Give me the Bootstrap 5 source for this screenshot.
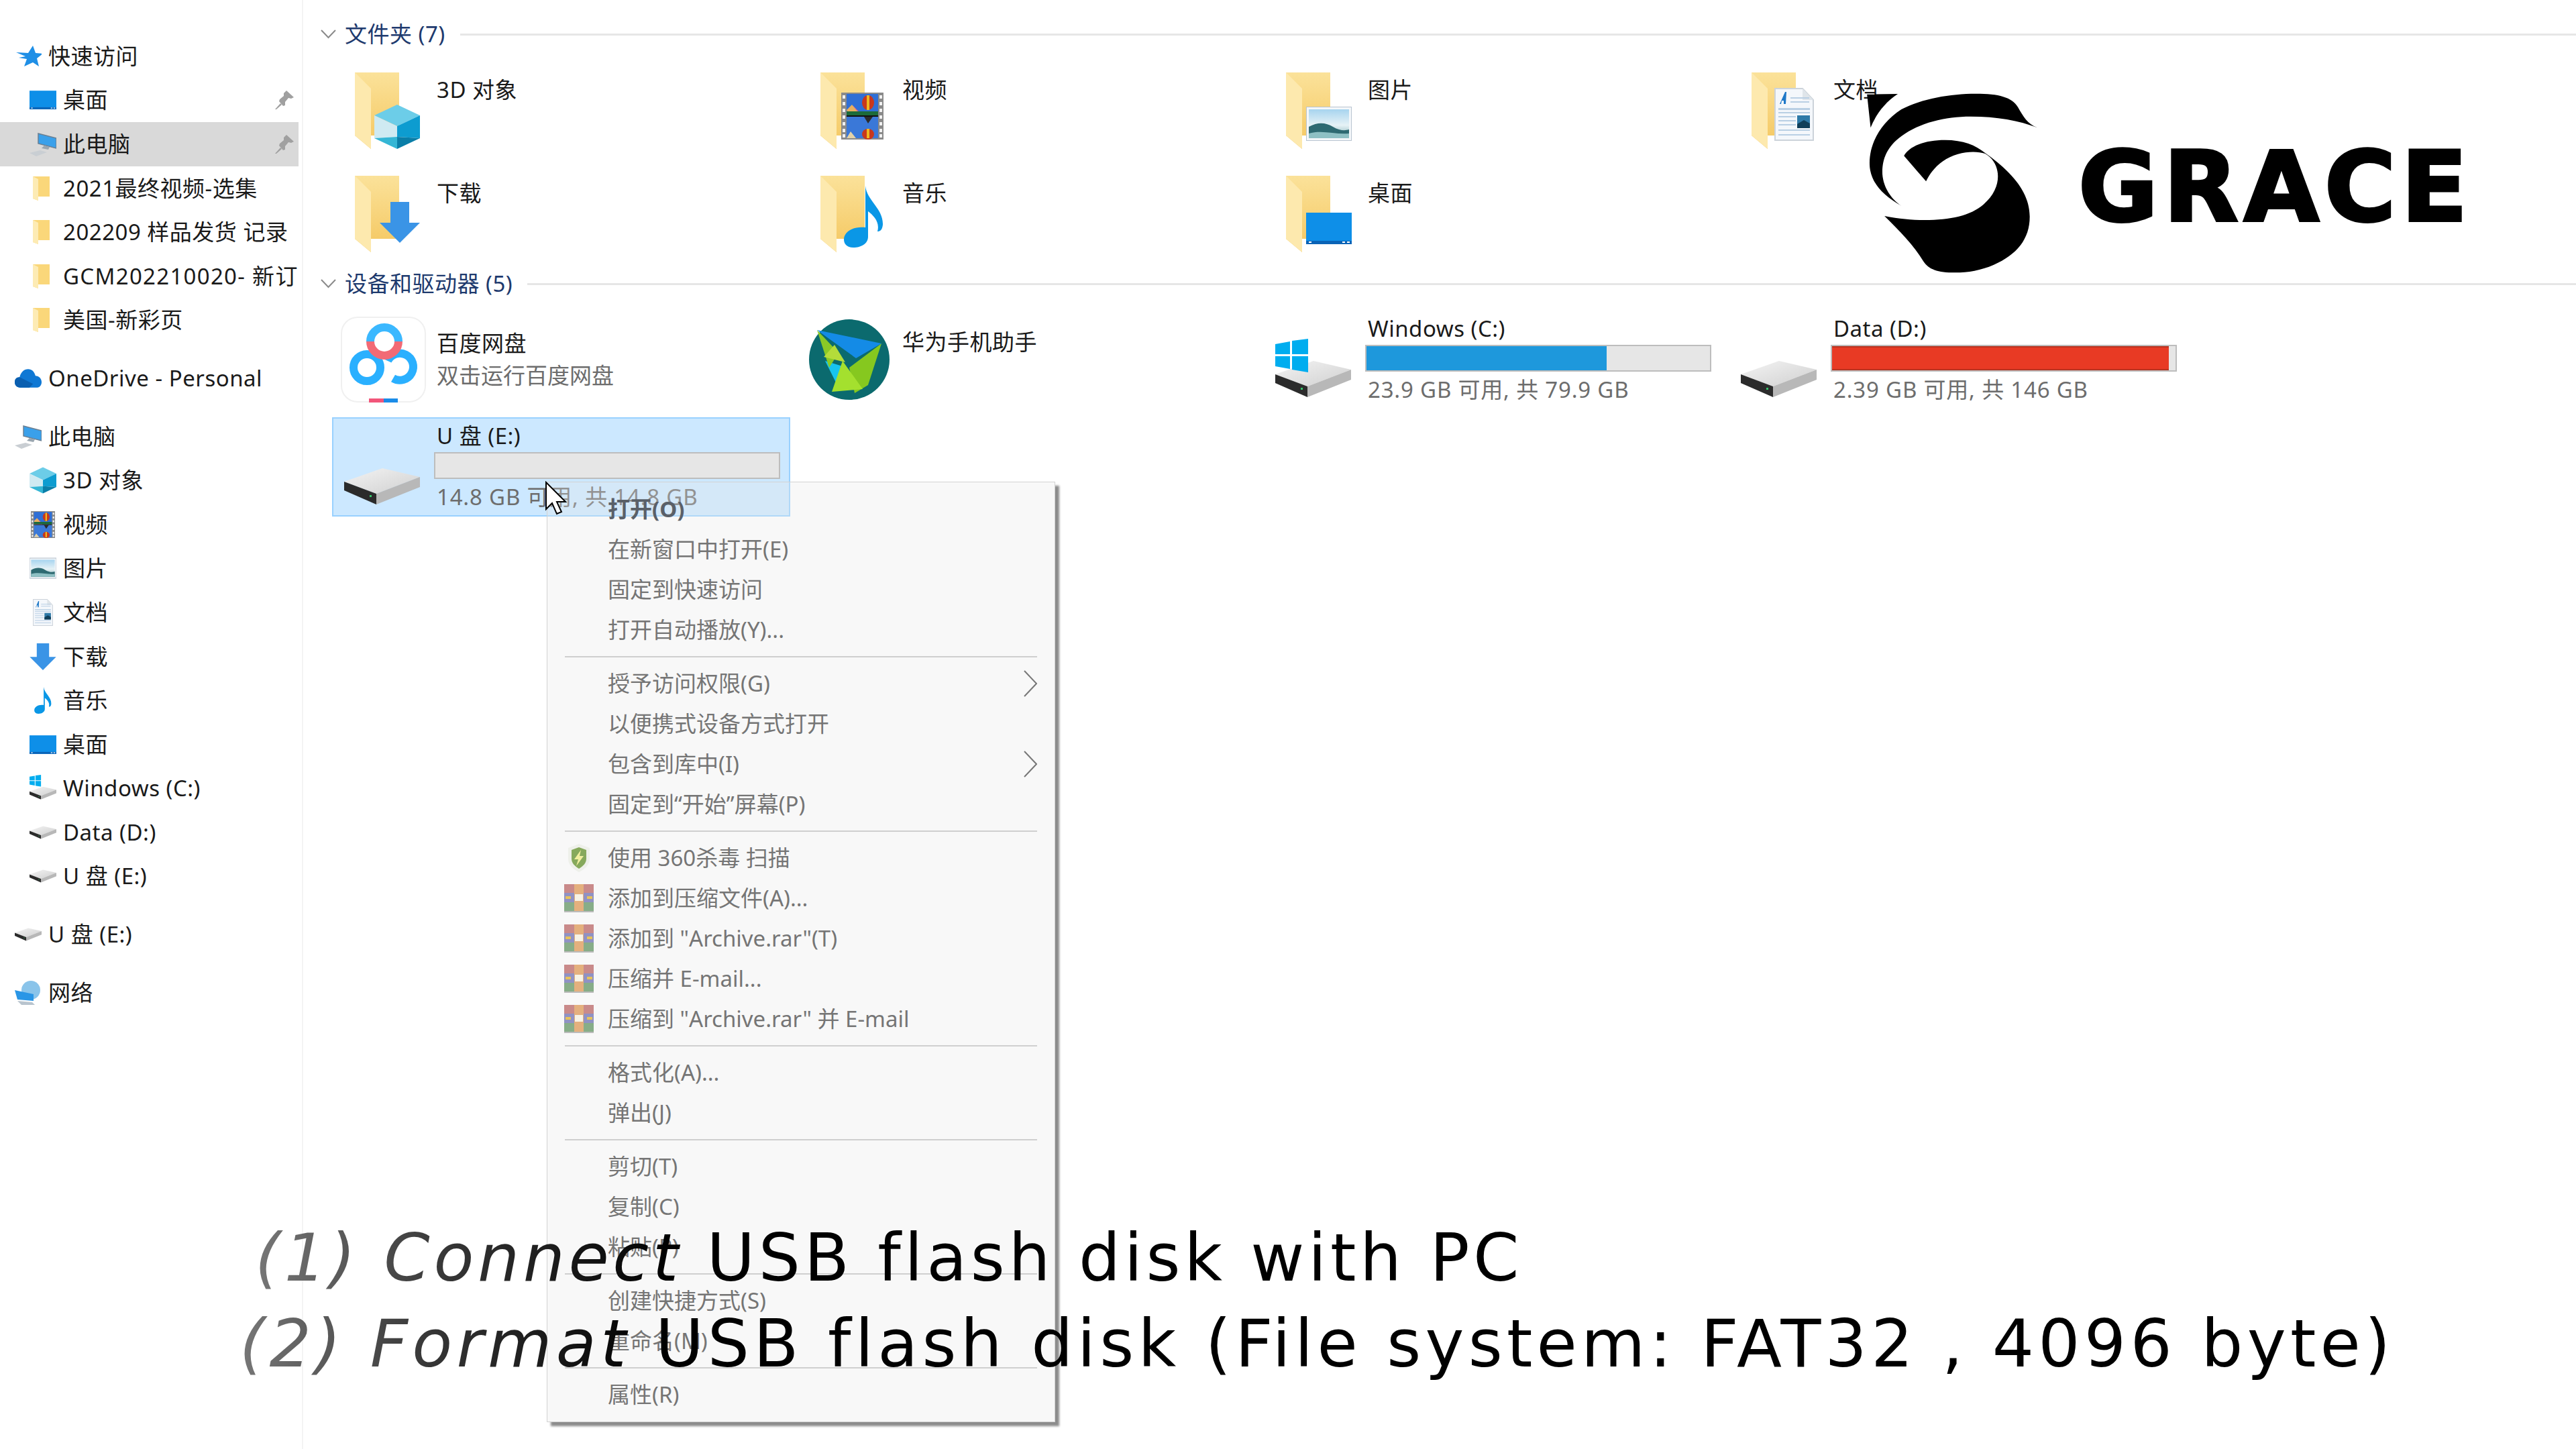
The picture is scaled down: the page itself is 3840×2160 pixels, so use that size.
<!DOCTYPE html>
<html lang="zh-CN">
<head>
  <meta charset="UTF-8">
  <title>此电脑</title>
  <link href="https://cdn.jsdelivr.net/npm/bootstrap@5.3.0/dist/css/bootstrap.min.css" rel="stylesheet">
  <style>
    body { width: 3840px; height: 2160px; overflow: hidden; background: #fff; color: #1a1a1a;
      font-family: "Noto Sans", "Noto Sans CJK SC", sans-serif; font-size: 33px; line-height: 44px; letter-spacing: .5px; }
    .explorer { position: relative; width: 3840px; height: 2160px; }

    /* left tree */
    .side-pane { width: 452px; flex-shrink: 0; padding-top: 51px; border-right: 2px solid #f4f4f4; height: 2160px; }
    .side-row { height: 65.6px; width: 445px; white-space: nowrap; overflow: hidden; }
    .side-row.lvl1 { padding-left: 22px; }
    .side-row.lvl2 { padding-left: 44px; }
    .side-row.current { background: #d9d9d9; }
    .side-row.gap-top { margin-top: 21px; }
    .side-icon { width: 40px; height: 40px; flex-shrink: 0; margin-right: 10px; }
    .side-label { flex-grow: 1; overflow: hidden; }
    .side-label.wide-digits { letter-spacing: 1.3px; }
    .side-pin { width: 28px; height: 28px; flex-shrink: 0; margin: 0 7px 0 4px; }

    /* content pane */
    .content-pane { padding: 32px 0 0 43px; flex-grow: 1; }
    .group-head { height: 38px; margin-left: -17px; color: #1e3a6e; }
    .group-head svg { width: 23px; height: 14px; margin-right: 13px; flex-shrink: 0; }
    .group-rule { flex-grow: 1; height: 3px; background: #e6e6e6; margin-left: 22px; }
    .tile-grid { display: grid; grid-template-columns: repeat(4, 683px); column-gap: 11px; }
    .folder-grid { margin-top: 30px; grid-auto-rows: 150px; row-gap: 4px; }
    .device-grid { margin-top: 20px; grid-auto-rows: 148px; row-gap: 12px; }
    .tile-item { display: flex; }
    .tile-item.picked { background: #cce8ff; outline: 2px solid #99d1ff; outline-offset: -2px; }
    .icon-slot { width: 156px; flex-shrink: 0; }
    .folder-slot { padding: 8px 0 0 34px; }
    .folder-slot svg { width: 98px; height: 114px; display: block; }
    .folder-name { padding-top: 12px; }
    .device-body { align-self: center; }
    .device-body.name-only { padding-bottom: 52px; }
    .drive-name { margin: -2px 0 2px; }
    .sub-text { color: #6d6d6d; letter-spacing: 0; }
    .sub-text.size-line { letter-spacing: .8px; }
    .slot-baidu { padding-left: 13px; align-self: center; }
    .slot-round { padding-left: 17px; align-self: center; }
    .slot-drive { padding-left: 18px; align-self: flex-end; margin-bottom: 18px; }
    .slot-baidu svg { width: 127px; height: 128px; display: block; }
    .slot-round svg { width: 120px; height: 120px; display: block; }
    .slot-drive svg { width: 113px; display: block; }
    .drive-bar { width: 516px; height: 40px; margin: 2px 0 5px -4px; border-radius: 0; background: #e6e6e6; border: 2px solid #bdbdbd; }
    .drive-bar .progress-bar { background: #1e98dc; transition: none; }
    .drive-bar .progress-bar.full { background: #e83a24; box-shadow: inset 0 2px 0 #b8321f, inset 0 -2px 0 #b8321f; }

    /* right click menu, lies over the tiles */
    .ctx-menu.dropdown-menu { display: block; position: absolute; z-index: 10; left: 815px; top: 718px; width: 758px; min-width: 0; padding: 10px 0 10px;
      margin: 0; border: 1px solid #d2d2d2; border-radius: 0; background: rgba(232, 232, 232, .3);
      box-shadow: 6px 6px 3px #8c8c8c; font-size: 33px; letter-spacing: 0; }
    .ctx-menu .dropdown-item { height: 60px; padding: 0 26px 0 25px; display: flex; align-items: center; color: #757575; }
    .ctx-menu .dropdown-item.main-item { font-weight: 700; color: #5a6068; }
    .ctx-menu .dropdown-divider { margin: 9px 26px; height: 2px; border: 0; background: #cfcfcf; opacity: 1; }
    .ctx-icon { width: 44px; height: 42px; margin-right: 21px; flex-shrink: 0; }
    .ctx-spacer { width: 65px; flex-shrink: 0; }
    .ctx-arrow { width: 20px; height: 40px; margin-left: auto; }

    .mouse-cursor { position: absolute; z-index: 20; left: 812px; top: 717px; width: 34px; height: 52px; }

    /* logo overlay */
    .logo-mark { position: absolute; left: 2777px; top: 138px; width: 264px; height: 270px; }
    .logo-word { position: absolute; left: 3098px; top: 184px; font-family: "DejaVu Sans", sans-serif; font-weight: 700; font-size: 145px; line-height: 190px;
      letter-spacing: 8px; color: #000; -webkit-text-stroke: 4px #000; }

    /* caption overlay */
    .caption-line { position: absolute; z-index: 20; font-family: "DejaVu Sans", sans-serif; font-size: 98px; line-height: 120px; white-space: nowrap; letter-spacing: 5.6px;
      background: linear-gradient(90deg, #777 0, #333 300px, #000 620px); -webkit-background-clip: text; background-clip: text; color: transparent; }
    .caption-one { left: 380px; top: 1815px; }
    .caption-two { left: 357px; top: 1943px; letter-spacing: 6.2px; }
    .slant { font-style: italic; }
  </style>
</head>
<body>
  <svg width="0" height="0" class="position-absolute">
    <defs>
      <linearGradient id="fold" x1="0" x2="0" y1="0" y2="1"><stop offset="0" stop-color="#fbe29a"/><stop offset="1" stop-color="#f4c65e"/></linearGradient>
      <linearGradient id="driveTop" x1="0" x2="1" y1="0" y2="1"><stop offset="0" stop-color="#f4f4f4"/><stop offset="1" stop-color="#cfcfcf"/></linearGradient>
      <linearGradient id="sky" x1="0" x2="0" y1="0" y2="1"><stop offset="0" stop-color="#a7d4ef"/><stop offset=".55" stop-color="#e6f2f6"/><stop offset="1" stop-color="#7fb0b5"/></linearGradient>

      <symbol id="folderBase" viewBox="0 0 98 114">
        <path d="M0 0H66V94H24V114L0 94Z" fill="url(#fold)"/>
        <path d="M0 0L24 24V114L0 94Z" fill="#fde9ae"/>
      </symbol>
      <symbol id="cube" viewBox="0 0 68 66">
        <path d="M34 0L68 16L34 32L0 16Z" fill="#6ccde8"/>
        <path d="M0 16L34 32V48L0 50Z" fill="#cfeaf2"/>
        <path d="M68 16L34 32V48L68 50Z" fill="#0d9cd0"/>
        <path d="M0 50L34 48V66Z" fill="#35b6d5"/>
        <path d="M68 50L34 48V66Z" fill="#0a7ea8"/>
      </symbol>
      <symbol id="film" viewBox="0 0 63 70">
        <rect width="63" height="70" fill="#8a8a8a"/>
        <rect x="8" y="2" width="47" height="32" fill="#2f6fd6"/>
        <rect x="8" y="36" width="47" height="32" fill="#3a78d8"/>
        <rect x="8" y="34" width="47" height="2" fill="#111"/>
        <path d="M8 34L18 20L26 28L30 34Z" fill="#d45a9a"/><path d="M8 26L16 18L24 28L12 34Z" fill="#e8b060"/>
        <rect x="8" y="28" width="47" height="6" fill="#1c6b3a"/>
        <ellipse cx="40" cy="15" rx="9" ry="11" fill="#c8381c"/><rect x="38" y="4" width="4" height="22" fill="#eeb820"/>
        <path d="M34 36H47L40 46Z" fill="#2b2b2b"/>
        <ellipse cx="40" cy="62" rx="9" ry="8" fill="#c8381c"/><rect x="38" y="54" width="4" height="14" fill="#eeb820"/>
        <path d="M8 68L14 58L22 68Z" fill="#e3d2a8"/>
        <g fill="#f1f1f1"><rect x="2" y="4" width="4" height="5"/><rect x="2" y="14" width="4" height="5"/><rect x="2" y="24" width="4" height="5"/><rect x="2" y="34" width="4" height="5"/><rect x="2" y="44" width="4" height="5"/><rect x="2" y="54" width="4" height="5"/><rect x="2" y="62" width="4" height="5"/><rect x="57" y="4" width="4" height="5"/><rect x="57" y="14" width="4" height="5"/><rect x="57" y="24" width="4" height="5"/><rect x="57" y="34" width="4" height="5"/><rect x="57" y="44" width="4" height="5"/><rect x="57" y="54" width="4" height="5"/><rect x="57" y="62" width="4" height="5"/></g>
      </symbol>
      <symbol id="photo" viewBox="0 0 68 51">
        <rect width="68" height="51" fill="#f4f7fa" stroke="#b8c4d0" stroke-width="2"/>
        <rect x="4" y="4" width="60" height="43" fill="url(#sky)"/>
        <path d="M4 30C18 22 30 24 40 30S58 36 64 34V47H4Z" fill="#2e6a72"/>
        <path d="M4 40C24 34 44 42 64 40V47H4Z" fill="#8ec0c4"/>
      </symbol>
      <symbol id="doc" viewBox="0 0 59 79">
        <path d="M1 1H42L58 18V78H1Z" fill="#f4f7fb" stroke="#ccd3da" stroke-width="2"/>
        <path d="M42 1L58 18H42Z" fill="#dfe5ea"/>
        <path d="M8 24L16 6H18L17 24H14L14 19H11L10 24Z" fill="#1e78c8"/>
        <g fill="#b9cfe4"><rect x="24" y="14" width="28" height="2"/><rect x="24" y="20" width="28" height="2"/><rect x="6" y="30" width="47" height="3"/><rect x="6" y="36" width="47" height="2"/><rect x="6" y="42" width="26" height="2"/><rect x="6" y="48" width="26" height="2"/><rect x="6" y="54" width="26" height="2"/><rect x="6" y="62" width="47" height="2"/><rect x="6" y="69" width="47" height="2"/></g>
        <rect x="34" y="41" width="19" height="19" fill="#2f7aa8"/><path d="M34 54L44 48L53 53V60H34Z" fill="#103f5a"/>
      </symbol>
      <symbol id="arrowDown" viewBox="0 0 60 61">
        <path d="M16 0H44V31H60L30 61L0 31H16Z" fill="#3a94e6"/>
      </symbol>
      <symbol id="note" viewBox="0 0 59 92">
        <path d="M32 0C34 22 59 34 58 58C57 66 54 68 50 68C54 54 44 44 36 38V76C36 86 26 92 14 92C4 92 0 86 0 80C0 68 14 60 32 62Z" fill="#0a97e6"/>
      </symbol>
      <symbol id="desk" viewBox="0 0 68 47">
        <rect width="68" height="47" fill="#0e8fe8"/><rect x="0" y="42" width="68" height="5" fill="#0a63b6"/>
        <rect x="4" y="43" width="4" height="2" fill="#fff"/><rect x="54" y="43" width="4" height="2" fill="#fff"/><rect x="61" y="43" width="4" height="2" fill="#fff"/>
      </symbol>
      <symbol id="drive" viewBox="0 0 113 54">
        <path d="M0 20L57 0L113 13L48 38Z" fill="url(#driveTop)"/>
        <path d="M113 13V28L48 54L48 38Z" fill="#b8b8b8"/>
        <path d="M0 20L48 38V54L0 33Z" fill="#2b2b2b"/>
        <rect x="38" y="40" width="3" height="3" fill="#35c46a"/>
      </symbol>
      <symbol id="winlogo" viewBox="0 0 49 50">
        <path d="M0 8L22 4V23H0Z M25 3L49 0V23H25Z M0 26H22V45L0 41Z M25 26H49V50L25 46Z" fill="#00adef"/>
      </symbol>
      <symbol id="star" viewBox="0 0 40 40">
        <path d="M27 4L31 15L42 16L33 23L36 35L27 29L14 35L18 24L6 22L16 20L2 14L20 15Z" fill="#1f8fe6"/>
      </symbol>
      <symbol id="pcIcon" viewBox="0 0 40 36">
        <path d="M13 2L40 9V24L13 17Z" fill="#3aa0ea" stroke="#6b7f92" stroke-width="1.5"/>
        <path d="M22 20L30 22L28 26L18 24Z" fill="#9aa6b0"/>
        <path d="M0 31L16 27L26 30L10 36Z" fill="#c9ced3"/>
      </symbol>
      <symbol id="smallFolder" viewBox="0 0 40 40">
        <path d="M5 2H30V32H13V38L5 35Z" fill="#fad77a"/><path d="M5 2L13 6V38L5 35Z" fill="#fdebb4"/>
      </symbol>
      <symbol id="cloud" viewBox="0 0 44 34">
        <path d="M9 32C3 32 0 28 0 23C0 18 3 15 8 15C10 7 15 2 22 2C28 2 32 6 34 13C40 13 44 18 44 23C44 28 41 32 37 32Z" fill="#0f78d4"/>
        <path d="M9 32C3 32 0 28 0 23C0 18 3 15 8 15L30 26L24 32Z" fill="#0a5fb0"/>
      </symbol>
      <symbol id="netIcon" viewBox="0 0 40 36">
        <circle cx="24" cy="14" r="14" fill="#8ac4ea"/>
        <path d="M0 14L28 20V30L4 28Z" fill="#2a96e6"/>
        <path d="M4 30L26 32L30 36L10 36Z" fill="#b8c4ce"/>
      </symbol>
      <symbol id="pinIcon" viewBox="0 0 28 28">
        <path d="M17 0L28 10L24 12L20 11L15 17L15 22L12 23L6 16L7 13L13 8L13 4Z M8 19L0 28L2 28L10 21Z" fill="#a0a0a0"/>
      </symbol>
      <symbol id="rarIcon" viewBox="0 0 44 42">
        <rect width="44" height="13" fill="#c98a8a"/><rect y="13" width="44" height="14" fill="#9092c4"/><rect y="27" width="44" height="13" fill="#87ad88"/>
        <rect x="15" width="14" height="40" fill="#e4b07e"/><rect x="16" y="15" width="12" height="10" fill="#f7f3e6"/>
        <rect x="2" y="18" width="8" height="4" fill="#e7c25c"/><rect x="34" y="18" width="8" height="4" fill="#e7c25c"/>
        <rect y="40" width="44" height="2" fill="#bbb"/>
      </symbol>
      <symbol id="shield" viewBox="0 0 44 42">
        <path d="M22 0L38 6V22C38 32 30 38 22 42C14 38 6 32 6 22V6Z" fill="#eef0ea"/>
        <path d="M22 5L33 9V22C33 29 28 33 22 37C16 33 11 29 11 22V9Z" fill="#86a95c"/>
        <path d="M25 9L15 23H21L18 33L29 18H23Z" fill="#f0ee9e"/>
      </symbol>
      <symbol id="chev" viewBox="0 0 23 14"><path d="M1 1L11.5 12L22 1" fill="none" stroke="#8a8a8a" stroke-width="2"/></symbol>
      <symbol id="chevRight" viewBox="0 0 20 40"><path d="M1 1L19 20L1 39" fill="none" stroke="#777" stroke-width="2"/></symbol>
    </defs>
  </svg>

  <div class="explorer d-flex">
    <nav class="side-pane">
      <div class="side-row lvl1 d-flex align-items-center"><svg class="side-icon"><use href="#star"/></svg><span class="side-label">快速访问</span></div>
      <div class="side-row lvl2 d-flex align-items-center"><svg class="side-icon"><use href="#desk"/></svg><span class="side-label">桌面</span><svg class="side-pin"><use href="#pinIcon"/></svg></div>
      <div class="side-row lvl2 current d-flex align-items-center"><svg class="side-icon"><use href="#pcIcon"/></svg><span class="side-label">此电脑</span><svg class="side-pin"><use href="#pinIcon"/></svg></div>
      <div class="side-row lvl2 d-flex align-items-center"><svg class="side-icon"><use href="#smallFolder"/></svg><span class="side-label">2021最终视频-选集</span></div>
      <div class="side-row lvl2 d-flex align-items-center"><svg class="side-icon"><use href="#smallFolder"/></svg><span class="side-label">202209 样品发货 记录</span></div>
      <div class="side-row lvl2 d-flex align-items-center"><svg class="side-icon"><use href="#smallFolder"/></svg><span class="side-label wide-digits">GCM202210020- 新订-</span></div>
      <div class="side-row lvl2 d-flex align-items-center"><svg class="side-icon"><use href="#smallFolder"/></svg><span class="side-label">美国-新彩页</span></div>
      <div class="side-row lvl1 gap-top d-flex align-items-center"><svg class="side-icon"><use href="#cloud"/></svg><span class="side-label">OneDrive - Personal</span></div>
      <div class="side-row lvl1 gap-top d-flex align-items-center"><svg class="side-icon"><use href="#pcIcon"/></svg><span class="side-label">此电脑</span></div>
      <div class="side-row lvl2 d-flex align-items-center"><svg class="side-icon"><use href="#cube"/></svg><span class="side-label">3D 对象</span></div>
      <div class="side-row lvl2 d-flex align-items-center"><svg class="side-icon"><use href="#film"/></svg><span class="side-label">视频</span></div>
      <div class="side-row lvl2 d-flex align-items-center"><svg class="side-icon"><use href="#photo"/></svg><span class="side-label">图片</span></div>
      <div class="side-row lvl2 d-flex align-items-center"><svg class="side-icon"><use href="#doc"/></svg><span class="side-label">文档</span></div>
      <div class="side-row lvl2 d-flex align-items-center"><svg class="side-icon"><use href="#arrowDown"/></svg><span class="side-label">下载</span></div>
      <div class="side-row lvl2 d-flex align-items-center"><svg class="side-icon"><use href="#note"/></svg><span class="side-label">音乐</span></div>
      <div class="side-row lvl2 d-flex align-items-center"><svg class="side-icon"><use href="#desk"/></svg><span class="side-label">桌面</span></div>
      <div class="side-row lvl2 d-flex align-items-center"><svg class="side-icon" viewBox="0 0 113 113"><use href="#drive" y="50" width="113" height="54"/><use href="#winlogo" x="0" y="0" width="49" height="50"/></svg><span class="side-label">Windows (C:)</span></div>
      <div class="side-row lvl2 d-flex align-items-center"><svg class="side-icon"><use href="#drive"/></svg><span class="side-label">Data (D:)</span></div>
      <div class="side-row lvl2 d-flex align-items-center"><svg class="side-icon"><use href="#drive"/></svg><span class="side-label">U 盘 (E:)</span></div>
      <div class="side-row lvl1 gap-top d-flex align-items-center"><svg class="side-icon"><use href="#drive"/></svg><span class="side-label">U 盘 (E:)</span></div>
      <div class="side-row lvl1 gap-top d-flex align-items-center"><svg class="side-icon"><use href="#netIcon"/></svg><span class="side-label">网络</span></div>
    </nav>

    <main class="content-pane">
      <div class="group-head d-flex align-items-center"><svg><use href="#chev"/></svg><span>文件夹 (7)</span><span class="group-rule"></span></div>
      <div class="tile-grid folder-grid">
        <div class="tile-item"><div class="icon-slot folder-slot"><svg viewBox="0 0 98 114"><use href="#folderBase"/><use href="#cube" x="29" y="48" width="68" height="66"/></svg></div><div class="folder-name">3D 对象</div></div>
        <div class="tile-item"><div class="icon-slot folder-slot"><svg viewBox="0 0 98 114"><use href="#folderBase"/><use href="#film" x="31" y="30" width="63" height="70"/></svg></div><div class="folder-name">视频</div></div>
        <div class="tile-item"><div class="icon-slot folder-slot"><svg viewBox="0 0 98 114"><use href="#folderBase"/><use href="#photo" x="30" y="51" width="68" height="51"/></svg></div><div class="folder-name">图片</div></div>
        <div class="tile-item"><div class="icon-slot folder-slot"><svg viewBox="0 0 98 114"><use href="#folderBase"/><use href="#doc" x="34" y="23" width="59" height="79"/></svg></div><div class="folder-name">文档</div></div>
        <div class="tile-item"><div class="icon-slot folder-slot"><svg viewBox="0 0 98 114"><use href="#folderBase"/><use href="#arrowDown" x="37" y="39" width="60" height="61"/></svg></div><div class="folder-name">下载</div></div>
        <div class="tile-item"><div class="icon-slot folder-slot"><svg viewBox="0 0 98 114"><use href="#folderBase"/><use href="#note" x="35" y="15" width="59" height="92"/></svg></div><div class="folder-name">音乐</div></div>
        <div class="tile-item"><div class="icon-slot folder-slot"><svg viewBox="0 0 98 114"><use href="#folderBase"/><use href="#desk" x="30" y="55" width="68" height="47"/></svg></div><div class="folder-name">桌面</div></div>
      </div>

      <div class="group-head d-flex align-items-center"><svg><use href="#chev"/></svg><span>设备和驱动器 (5)</span><span class="group-rule"></span></div>
      <div class="tile-grid device-grid">
        <div class="tile-item">
          <div class="icon-slot slot-baidu">
            <svg viewBox="0 0 127 128">
              <rect x="1" y="1" width="125" height="126" rx="24" fill="#fff" stroke="#f0f0f0" stroke-width="2"/>
              <circle cx="39" cy="76" r="20" fill="none" stroke="#2ab0ff" stroke-width="12"/>
              <path d="M78 92A20 20 0 1 0 70 66" fill="none" stroke="#2ab0ff" stroke-width="12"/>
              <path d="M44 37A21 21 0 0 1 86 37" fill="none" stroke="#3bb8ff" stroke-width="12"/>
              <path d="M44 37A21 21 0 0 0 86 37" fill="none" stroke="#f26a75" stroke-width="12"/>
              <rect x="42" y="122" width="22" height="6" fill="#f2557a"/><rect x="64" y="122" width="21" height="6" fill="#1a8ce8"/>
            </svg>
          </div>
          <div class="device-body"><div>百度网盘</div><div class="sub-text mt-1">双击运行百度网盘</div></div>
        </div>
        <div class="tile-item">
          <div class="icon-slot slot-round">
            <svg viewBox="0 0 120 120">
              <ellipse cx="60" cy="60" rx="60" ry="60" fill="#0b6a6e"/>
              <path d="M12 16L108 36L70 58Z" fill="#148be6"/>
              <path d="M24 62L42 98L50 70Z" fill="#17c4ef"/>
              <path d="M12 16L44 50L30 72Z" fill="#8ac926"/>
              <path d="M38 38L54 64L22 56Z" fill="#b4dc3a"/>
              <path d="M108 36L88 98L68 110L60 72Z" fill="#86c81f"/>
              <path d="M50 62L80 104L34 108Z" fill="#a4e02e"/>
            </svg>
          </div>
          <div class="device-body name-only"><div>华为手机助手</div></div>
        </div>
        <div class="tile-item">
          <div class="icon-slot slot-drive">
            <svg viewBox="0 0 113 87" height="87"><use href="#drive" y="33" width="113" height="54"/><use href="#winlogo" width="49" height="50"/></svg>
          </div>
          <div class="device-body">
            <div class="drive-name">Windows (C:)</div>
            <div class="progress drive-bar"><div class="progress-bar" style="width: 70%"></div></div>
            <div class="sub-text size-line">23.9 GB 可用, 共 79.9 GB</div>
          </div>
        </div>
        <div class="tile-item">
          <div class="icon-slot slot-drive">
            <svg viewBox="0 0 113 54" height="54"><use href="#drive"/></svg>
          </div>
          <div class="device-body">
            <div class="drive-name">Data (D:)</div>
            <div class="progress drive-bar"><div class="progress-bar full" style="width: 98%"></div></div>
            <div class="sub-text size-line">2.39 GB 可用, 共 146 GB</div>
          </div>
        </div>
        <div class="tile-item picked">
          <div class="icon-slot slot-drive">
            <svg viewBox="0 0 113 54" height="54"><use href="#drive"/></svg>
          </div>
          <div class="device-body">
            <div class="drive-name">U 盘 (E:)</div>
            <div class="progress drive-bar"><div class="progress-bar" style="width: 0%"></div></div>
            <div class="sub-text size-line">14.8 GB 可用, 共 14.8 GB</div>
          </div>
        </div>
      </div>
    </main>

    <div class="ctx-menu dropdown-menu">
      <div class="dropdown-item main-item"><span class="ctx-spacer"></span>打开(O)</div>
      <div class="dropdown-item"><span class="ctx-spacer"></span>在新窗口中打开(E)</div>
      <div class="dropdown-item"><span class="ctx-spacer"></span>固定到快速访问</div>
      <div class="dropdown-item"><span class="ctx-spacer"></span>打开自动播放(Y)...</div>
      <div class="dropdown-divider"></div>
      <div class="dropdown-item"><span class="ctx-spacer"></span>授予访问权限(G)<svg class="ctx-arrow"><use href="#chevRight"/></svg></div>
      <div class="dropdown-item"><span class="ctx-spacer"></span>以便携式设备方式打开</div>
      <div class="dropdown-item"><span class="ctx-spacer"></span>包含到库中(I)<svg class="ctx-arrow"><use href="#chevRight"/></svg></div>
      <div class="dropdown-item"><span class="ctx-spacer"></span>固定到“开始”屏幕(P)</div>
      <div class="dropdown-divider"></div>
      <div class="dropdown-item"><svg class="ctx-icon"><use href="#shield"/></svg>使用 360杀毒 扫描</div>
      <div class="dropdown-item"><svg class="ctx-icon"><use href="#rarIcon"/></svg>添加到压缩文件(A)...</div>
      <div class="dropdown-item"><svg class="ctx-icon"><use href="#rarIcon"/></svg>添加到 "Archive.rar"(T)</div>
      <div class="dropdown-item"><svg class="ctx-icon"><use href="#rarIcon"/></svg>压缩并 E-mail...</div>
      <div class="dropdown-item"><svg class="ctx-icon"><use href="#rarIcon"/></svg>压缩到 "Archive.rar" 并 E-mail</div>
      <div class="dropdown-divider"></div>
      <div class="dropdown-item"><span class="ctx-spacer"></span>格式化(A)...</div>
      <div class="dropdown-item"><span class="ctx-spacer"></span>弹出(J)</div>
      <div class="dropdown-divider"></div>
      <div class="dropdown-item"><span class="ctx-spacer"></span>剪切(T)</div>
      <div class="dropdown-item"><span class="ctx-spacer"></span>复制(C)</div>
      <div class="dropdown-item"><span class="ctx-spacer"></span>粘贴(P)</div>
      <div class="dropdown-divider"></div>
      <div class="dropdown-item"><span class="ctx-spacer"></span>创建快捷方式(S)</div>
      <div class="dropdown-item"><span class="ctx-spacer"></span>重命名(M)</div>
      <div class="dropdown-divider"></div>
      <div class="dropdown-item"><span class="ctx-spacer"></span>属性(R)</div>
    </div>

    <svg class="mouse-cursor" viewBox="0 0 34 52"><path d="M2 2V42L11 33L18 49L25 46L18 31H31Z" fill="#fff" stroke="#000" stroke-width="2"/></svg>

    <svg class="logo-mark" viewBox="310 235 345 810" preserveAspectRatio="none">
      <path d="M318 243L378 241C352 280 335 335 325 392Z" fill="#000"/>
      <path d="M385 742C345 690 323 630 323 550C323 460 345 370 385 310C425 262 480 240 530 240C575 240 600 255 612 300C622 340 630 375 650 392C615 360 570 342 520 342C470 342 420 370 385 430C355 480 347 540 348 600C350 660 365 710 385 742Z" fill="#000"/>
      <path d="M390 518C400 475 430 447 470 447C505 447 530 470 548 505C600 590 635 680 635 790C635 890 610 960 565 1005C540 1030 515 1040 490 1040C455 1040 438 1025 428 990C410 920 380 850 352 787C380 800 405 805 430 805C480 805 520 785 545 735C565 695 573 650 573 610C573 570 565 530 548 508C535 498 515 497 495 510C465 530 445 575 433 632Z" fill="#000"/>
    </svg>
    <div class="logo-word">GRACE</div>

    <div class="caption-line caption-one"><span class="slant">(1) Connect</span> USB flash disk with PC</div>
    <div class="caption-line caption-two"><span class="slant">(2) Format</span> USB flash disk (File system: FAT32 , 4096 byte)</div>
  </div>

  <script src="https://cdn.jsdelivr.net/npm/bootstrap@5.3.0/dist/js/bootstrap.bundle.min.js"></script>
</body>
</html>
